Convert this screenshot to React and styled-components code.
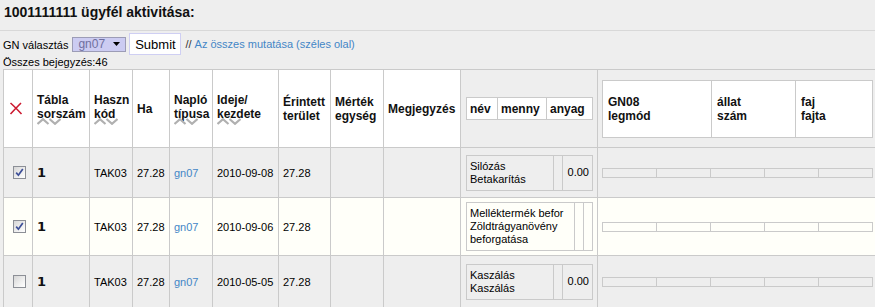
import React from 'react';
import styled, { createGlobalStyle } from 'styled-components';

const GlobalStyle = createGlobalStyle`
  html, body {
    margin: 0;
    padding: 0;
    background: #eeeeee;
    overflow: hidden;
  }
  body {
    font-family: "Liberation Sans", Arial, sans-serif;
    font-size: 11px;
    color: #000;
  }
`;

const LINE = '#cacaca';
const COLS = [29, 57, 43, 37, 43, 66, 52, 53, 77, 137, 280];

const Page = styled.div`
  padding-left: 3px;
`;

const Title = styled.h1`
  margin: 0;
  padding: 4px 0 0 1px;
  font-size: 14px;
  line-height: 16px;
  font-weight: bold;
  color: #111;
`;

const Divider = styled.div`
  margin: 10px 0 0 -3px;
  height: 1px;
  background: #d8d8d8;
`;

const FormRow = styled.div`
  display: flex;
  align-items: center;
  height: 22px;
  margin-top: 2px;
`;

const Label = styled.span`
  margin-right: 4px;
  padding-top: 2px;
`;

const Select = styled.div`
  box-sizing: border-box;
  width: 54px;
  height: 15px;
  margin-right: 3px;
  padding: 0 5px 0 5px;
  display: flex;
  align-items: center;
  border: 1px solid #9c9cb6;
  background: #ccccf2;
  color: #7070a0;
  font-size: 12px;
  svg {
    margin-left: auto;
  }
`;

const Button = styled.button`
  box-sizing: border-box;
  width: 52px;
  height: 22px;
  padding: 0;
  border: 1px solid #cfcff3;
  background: #fff;
  font-family: inherit;
  font-size: 13px;
  color: #000;
`;

const Slashes = styled.span`
  margin-left: 4px;
  color: #333;
`;

const Link = styled.a`
  color: #4386c6;
  text-decoration: none;
`;

const Count = styled.div`
  margin-top: 1px;
  line-height: 13px;
`;

const Grid = styled.div`
  display: grid;
  width: max-content;
  grid-template-columns: ${COLS.map((c) => c + 'px').join(' ')};
  grid-template-rows: 78px 50px 58px 52px;
  border-left: 1px solid ${LINE};
  border-top: 1px solid ${LINE};
`;

const Cell = styled.div`
  box-sizing: border-box;
  display: flex;
  align-items: center;
  justify-content: ${(p) => (p.$center ? 'center' : 'flex-start')};
  padding: ${(p) => p.$pad || '0 4px'};
  border-right: 1px solid ${LINE};
  border-bottom: 1px solid ${LINE};
  background: ${(p) => p.$bg};
  overflow: hidden;
`;

const HeadCell = styled(Cell)`
  font-size: 12px;
  font-weight: bold;
  line-height: 14px;
  color: #111;
`;

const Num = styled.span`
  font-family: "DejaVu Sans", sans-serif;
  font-weight: bold;
  font-size: 13px;
  color: #111;
`;

const Nested = styled.div`
  display: grid;
  grid-template-columns: ${(p) => p.$cols.map((c) => c + 'px').join(' ')};
  grid-template-rows: ${(p) => p.$h}px;
  border-left: 1px solid ${LINE};
  border-top: 1px solid ${LINE};
  background: ${(p) => p.$bg || 'transparent'};
`;

const NCell = styled.div`
  box-sizing: border-box;
  display: flex;
  align-items: center;
  justify-content: ${(p) => (p.$right ? 'flex-end' : 'flex-start')};
  padding: 0 ${(p) => p.$px ?? 3}px;
  border-right: 1px solid ${LINE};
  border-bottom: 1px solid ${LINE};
  line-height: ${(p) => (p.$bold ? 14 : 13)}px;
  font-size: ${(p) => (p.$bold ? 12 : 11)}px;
  font-weight: ${(p) => (p.$bold ? 'bold' : 'normal')};
  color: ${(p) => (p.$bold ? '#111' : '#000')};
  white-space: nowrap;
`;

const Box = styled.span`
  box-sizing: border-box;
  width: 13px;
  height: 13px;
  display: inline-flex;
  align-items: center;
  justify-content: center;
  border: 1px solid #8c8f96;
  background: linear-gradient(135deg, #d6d6d6 0%, #f4f4f4 70%, #fff 100%);
`;

function Checkbox({ checked }) {
  return (
    <Box>
      {checked && (
        <svg width="9" height="9" viewBox="0 0 9 9">
          <path d="M1.2 4.6 L3.4 7.2 L7.8 1" fill="none" stroke="#3d4f98" strokeWidth="1.7" />
        </svg>
      )}
    </Box>
  );
}

function SortArrows() {
  return (
    <svg width="24" height="7" viewBox="0 0 24 7" style={{ display: 'block', marginTop: -3 }}>
      <path d="M0.5 6 L6 1.2 L11.5 6" fill="none" stroke="#b0b0b0" strokeWidth="2.2" />
      <path d="M12.5 1 L18 5.8 L23.5 1" fill="none" stroke="#b0b0b0" strokeWidth="2.2" />
    </svg>
  );
}

function RedX() {
  return (
    <svg width="14" height="13" viewBox="0 0 14 13">
      <path d="M1.5 1 Q6 5 12.5 12" fill="none" stroke="#cc1a30" strokeWidth="1.6" />
      <path d="M12 1 Q7 6 1.5 12" fill="none" stroke="#cc1a30" strokeWidth="1.6" />
    </svg>
  );
}

function Head({ lines, sort, bg = '#fff' }) {
  return (
    <HeadCell $bg={bg}>
      <div>
        {lines.map((l) => (
          <div key={l}>{l}</div>
        ))}
        {sort && <SortArrows />}
      </div>
    </HeadCell>
  );
}

const rows = [
  { checked: true, date: '2010-09-08', bg: '#eeeeee', names: ['Silózás', 'Betakarítás'], qty: '0.00', cols: [87, 9, 30], h: 35 },
  { checked: true, date: '2010-09-06', bg: '#fffff9', names: ['Melléktermék befor', 'Zöldtrágyanövény', 'beforgatása'], qty: '', cols: [108, 9, 9], h: 48 },
  { checked: false, date: '2010-05-05', bg: '#eeeeee', names: ['Kaszálás', 'Kaszálás'], qty: '0.00', cols: [87, 9, 30], h: 35 },
];

export default function App() {
  return (
    <Page>
      <GlobalStyle />
      <Title>1001111111 ügyfél aktivitása:</Title>
      <Divider />
      <FormRow>
        <Label>GN választás</Label>
        <Select>
          gn07
          <svg width="7" height="5" viewBox="0 0 7 5">
            <path d="M0 0 H7 L3.5 4 Z" fill="#000" />
          </svg>
        </Select>
        <Button>Submit</Button>
        <Slashes>//</Slashes>&nbsp;
        <Link href="#">Az összes mutatása (széles olal)</Link>
      </FormRow>
      <Count>Összes bejegyzés:46</Count>
      <Grid>
        <HeadCell $bg="#fff" $pad="0 0 0 5px">
          <RedX />
        </HeadCell>
        <Head lines={['Tábla', 'sorszám']} sort />
        <Head lines={['Haszn', 'kód']} sort />
        <Head lines={['Ha']} />
        <Head lines={['Napló', 'típusa']} sort />
        <Head lines={['Ideje/', 'kezdete']} sort />
        <Head lines={['Érintett', 'terület']} />
        <Head lines={['Mérték', 'egység']} />
        <Head lines={['Megjegyzés']} />
        <HeadCell $bg="#eeeeee" $pad="0 0 0 5px">
          <Nested $cols={[31, 49, 46]} $h={22} $bg="#fff">
            <NCell $bold>név</NCell>
            <NCell $bold>menny</NCell>
            <NCell $bold>anyag</NCell>
          </Nested>
        </HeadCell>
        <HeadCell $bg="#eeeeee" $pad="0 0 0 4px">
          <Nested $cols={[109, 84, 77]} $h={57} $bg="#fff">
            <NCell $bold $px={5}>GN08<br />legmód</NCell>
            <NCell $bold $px={5}>állat<br />szám</NCell>
            <NCell $bold $px={5}>faj<br />fajta</NCell>
          </Nested>
        </HeadCell>

        {rows.map((r) => (
          <React.Fragment key={r.date}>
            <Cell $bg={r.bg} $center $pad="0 0 0 2px">
              <Checkbox checked={r.checked} />
            </Cell>
            <Cell $bg={r.bg}><Num>1</Num></Cell>
            <Cell $bg={r.bg}>TAK03</Cell>
            <Cell $bg={r.bg}>27.28</Cell>
            <Cell $bg={r.bg}><Link href="#">gn07</Link></Cell>
            <Cell $bg={r.bg}>{r.date}</Cell>
            <Cell $bg={r.bg}>27.28</Cell>
            <Cell $bg={r.bg} />
            <Cell $bg={r.bg} />
            <Cell $bg={r.bg} $pad="0 0 0 5px">
              <Nested $cols={r.cols} $h={r.h}>
                <NCell>
                  <div>
                    {r.names.map((n, i) => (
                      <div key={i}>{n}</div>
                    ))}
                  </div>
                </NCell>
                <NCell />
                <NCell $right>{r.qty}</NCell>
              </Nested>
            </Cell>
            <Cell $bg={r.bg} $pad="0 0 0 4px">
              <Nested $cols={[54, 54, 54, 54, 54]} $h={9}>
                <NCell /><NCell /><NCell /><NCell /><NCell />
              </Nested>
            </Cell>
          </React.Fragment>
        ))}
      </Grid>
    </Page>
  );
}
